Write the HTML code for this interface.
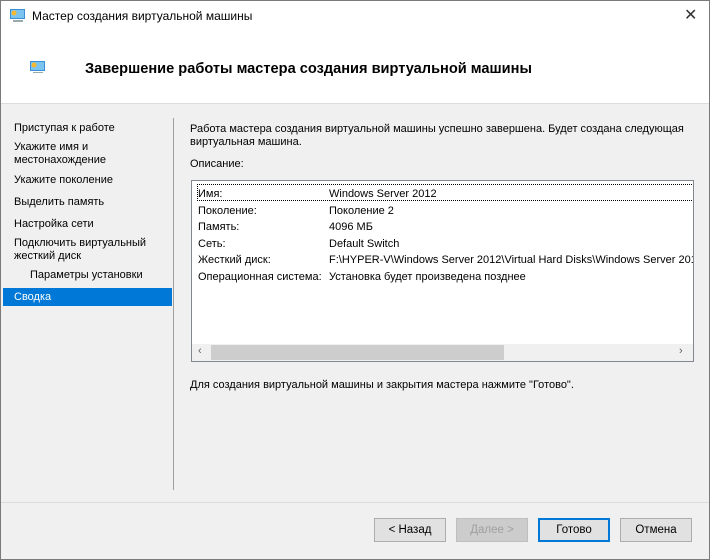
<!DOCTYPE html><html><head><meta charset="utf-8"><style>
*{margin:0;padding:0;box-sizing:border-box}
body{width:710px;height:560px;overflow:hidden;font-family:"Liberation Sans",sans-serif;font-size:11px;color:#000;background:#f0f0f0;position:relative}
.a{position:absolute;white-space:nowrap}
.btn{position:absolute;top:518px;width:72px;height:24px;border:1px solid #adadad;background:#e1e1e1;text-align:center;line-height:22px;font-size:11.5px}
</style></head><body>
<div class="a" style="left:0;top:0;width:710px;height:103px;background:#fff"></div>
<div class="a" style="left:0;top:103px;width:710px;height:1px;background:#dcdcdc"></div>
<svg class="a" style="left:10px;top:9px" width="16" height="14"><rect x="0" y="0" width="15" height="10" fill="#3a8fd8"/><rect x="1" y="1" width="13" height="8" fill="#7cc4f0"/><circle cx="4" cy="4" r="2.5" fill="#f5b82e"/><rect x="3" y="11" width="10" height="2" fill="#9aa"/></svg>
<div class="a" style="left:32px;top:9px;font-size:12px">Мастер создания виртуальной машины</div>
<div class="a" style="left:684px;top:5px;font-size:16px;color:#333">✕</div>
<svg class="a" style="left:30px;top:61px" width="16" height="14"><rect x="0" y="0" width="15" height="10" fill="#3a8fd8"/><rect x="1" y="1" width="13" height="8" fill="#7cc4f0"/><circle cx="4" cy="4" r="2.5" fill="#f5b82e"/><rect x="3" y="11" width="10" height="1" fill="#9aa"/></svg>
<div class="a" style="left:85px;top:61px;font-size:14.6px;font-weight:bold">Завершение работы мастера создания виртуальной машины</div>
<div class="a" style="left:173px;top:118px;width:1px;height:372px;background:#a0a0a0"></div>
<div class="a" style="left:14px;top:122px">Приступая к работе</div>
<div class="a" style="left:14px;top:141px;line-height:13px">Укажите имя и<br>местонахождение</div>
<div class="a" style="left:14px;top:174px">Укажите поколение</div>
<div class="a" style="left:14px;top:196px">Выделить память</div>
<div class="a" style="left:14px;top:218px">Настройка сети</div>
<div class="a" style="left:14px;top:237px;line-height:13px">Подключить виртуальный<br>жесткий диск</div>
<div class="a" style="left:30px;top:269px">Параметры установки</div>
<div class="a" style="left:3px;top:288px;width:169px;height:18px;background:#0078d7;color:#fff;padding:3px 11px">Сводка</div>
<div class="a" style="left:190px;top:123px;line-height:13px">Работа мастера создания виртуальной машины успешно завершена. Будет создана следующая<br>виртуальная машина.</div>
<div class="a" style="left:190px;top:158px">Описание:</div>
<div class="a" style="left:191px;top:180px;width:503px;height:182px;border:1px solid #828790;background:#fff;overflow:hidden">
<div class="a" style="left:5px;top:3px;width:497px;height:17px;border:1px dotted #000"></div>
<div class="a" style="left:6px;top:5px;line-height:16.5px">Имя:<br>Поколение:<br>Память:<br>Сеть:<br>Жесткий диск:<br>Операционная система:</div>
<div class="a" style="left:137px;top:5px;line-height:16.5px">Windows Server 2012<br>Поколение 2<br>4096 МБ<br>Default Switch<br>F:\HYPER-V\Windows Server 2012\Virtual Hard Disks\Windows Server 2012.vhdx<br>Установка будет произведена позднее</div>
<div class="a" style="left:0;top:163px;width:501px;height:17px;background:#f0f0f0"></div>
<div class="a" style="left:19px;top:164px;width:293px;height:15px;background:#cdcdcd"></div>
<div class="a" style="left:6px;top:164px;color:#606060;font-size:11px">‹</div>
<div class="a" style="left:487px;top:164px;color:#606060;font-size:11px">›</div>
</div>
<div class="a" style="left:190px;top:379px">Для создания виртуальной машины и закрытия мастера нажмите "Готово".</div>
<div class="a" style="left:0;top:502px;width:710px;height:1px;background:#dcdcdc"></div>
<div class="btn" style="left:374px">&lt; Назад</div>
<div class="btn" style="left:456px;background:#ccc;border-color:#bfbfbf;color:#a0a0a0">Далее &gt;</div>
<div class="btn" style="left:538px;border:2px solid #0078d7;line-height:20px">Готово</div>
<div class="btn" style="left:620px">Отмена</div>
<div class="a" style="left:0;top:0;width:710px;height:560px;border:1px solid #7a7a7a"></div>
</body></html>
